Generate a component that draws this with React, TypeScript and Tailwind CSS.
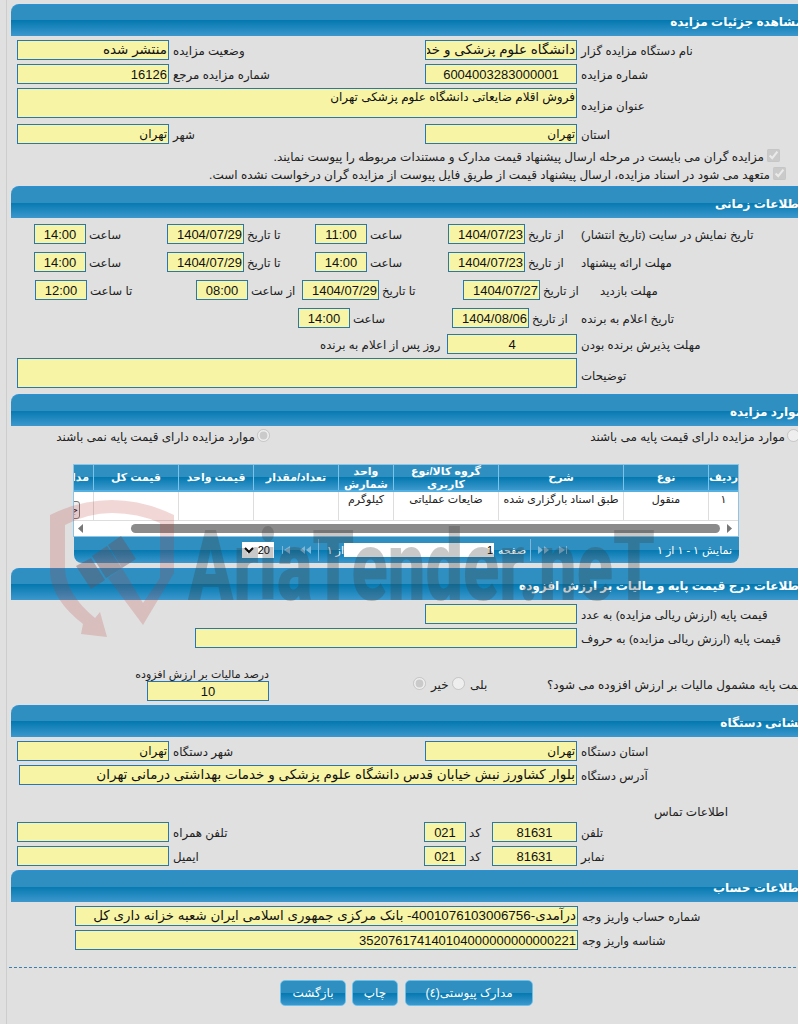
import React from 'react';

const HEADER_BG = 'bg-[linear-gradient(#2e8fc0_0%,#2e8fc0_50%,#0479b0_50%,#3c98cd_100%)]';

const Field: React.FC<{ w: string; value?: string; center?: boolean; h?: string; size?: string }> = ({ w, value = '', center, h = 'h-5', size }) => {
  // persian values are set a bit smaller than the digits
  const fontSize = size ?? (/[\u0600-\u06FF]/.test(value) ? 'text-[12px]' : 'text-[13px]');
  return (
    <input
      dir="rtl"
      readOnly
      value={value}
      className={`${w} ${h} ${fontSize} ${center ? 'text-center' : 'text-right'} shrink-0 border border-[#2a78ab] bg-[#f7f5a5] px-px text-[#111] outline-none`}
    />
  );
};

const Label: React.FC<{ w?: string; pad?: string; children: React.ReactNode }> = ({ w = '', pad = 'pl-[3px]', children }) => (
  <span dir="rtl" className={`${w} ${pad} h-5 shrink-0 whitespace-nowrap text-left text-[11.8px] leading-[22px] text-[#222]`}>
    {children}
  </span>
);

const Header: React.FC<{ title: string }> = ({ title }) => (
  <div dir="rtl" className={`${HEADER_BG} flex h-8 w-[800px] items-center rounded-tl-lg border-t border-[#2b91d6] pr-[8px] pt-[2px] text-[12px] font-bold text-white`}>
    {title}
  </div>
);

const Row: React.FC<{ className?: string; children: React.ReactNode }> = ({ className = 'mt-1', children }) => (
  <div className={`flex items-start ${className}`}>{children}</div>
);

const Check: React.FC<{ pad: string; text: string }> = ({ pad, text }) => (
  <div dir="rtl" className={`flex h-[18px] w-[800px] items-center ${pad} text-[12px] text-[#222]`}>
    <input type="checkbox" checked disabled readOnly className="m-0 mb-1 ml-[3px] h-[13px] w-[13px]" />
    <span className="whitespace-nowrap">{text}</span>
  </div>
);

const columns = [
  { title: 'ردیف', w: 'w-[30px]', cell: '۱' },
  { title: 'نوع', w: 'w-[85px]', cell: 'منقول' },
  { title: 'شرح', w: 'w-[125px]', cell: 'طبق اسناد بارگزاری شده' },
  { title: 'گروه کالا/نوع کاربری', w: 'w-[105px]', cell: 'ضایعات عملیاتی' },
  { title: 'واحد شمارش', w: 'w-[55px]', cell: 'کیلوگرم' },
  { title: 'تعداد/مقدار', w: 'w-[85px]', cell: '' },
  { title: 'قیمت واحد', w: 'w-[75px]', cell: '' },
  { title: 'قیمت کل', w: 'w-[85px]', cell: '' },
];

const ItemsTable = () => (
  <div className="ml-[62px] mt-[17px] w-[666px]">
    <div dir="rtl" className="overflow-hidden border border-[#8cc5e6] bg-white">
      <div className={`${HEADER_BG} flex h-[27px] w-[724px] border-b-2 border-b-[#55b0e2]`}>
        {columns.map((c) => (
          <div key={c.title} className={`${c.w} flex shrink-0 items-center justify-center border-l border-[#7cc3ea] px-1 text-center text-[11px] font-bold leading-[13px] text-white`}>
            {c.title}
          </div>
        ))}
        <div className="flex w-[79px] shrink-0 items-center pr-[4px] text-[11px] font-bold text-white">مدارک</div>
      </div>
      <div className="flex h-[29px] w-[724px] border-b border-[#ddd]">
        {columns.map((c) => (
          <div key={c.title} className={`${c.w} shrink-0 whitespace-nowrap border-l border-[#ddd] text-center text-[11px] leading-[15px] text-[#222]`}>
            {c.cell}
          </div>
        ))}
        <div className="w-[79px] shrink-0 pr-[13px] pt-[4px]">
          <button className="h-[18px] w-[34px] rounded-[3px] border border-[#777] bg-[#eee] p-0 text-[10px] text-[#222]">جزئیات</button>
        </div>
      </div>
      <div dir="ltr" className="flex h-[15px] w-[664px] items-center bg-white">
        <svg width="6" height="9" viewBox="0 0 6 9" className="ml-[4px]"><path d="M5 0v9L0 4.500z" fill="#777" /></svg>
        <div className="ml-[47px] h-[9px] w-[589px] rounded-full bg-[#8b8b8b]" />
        <svg width="6" height="9" viewBox="0 0 6 9" className="ml-[7px]"><path d="M0 0v9l5-4.500z" fill="#777" /></svg>
      </div>
    </div>
    <div className={`${HEADER_BG} ml-px flex h-[26px] w-[665px] items-center rounded-b-lg text-[11px] text-white`}>
      <select dir="rtl" className="ml-[168px] h-4 w-8 shrink-0 border-0 bg-white text-[11px] text-black" defaultValue="20">
        <option>20</option>
      </select>
      <svg width="30" height="8" viewBox="0 0 30 8" fill="#7fb7d8" className="ml-[8px] shrink-0">
        <path d="M0 0h1v8H0zM8 0v8L2 4zM23 0v8l-5-4zM29 0v8l-5-4z" />
      </svg>
      <div className="ml-[6px] h-[22px] w-px shrink-0 bg-[#7fb7d8]" />
      <span dir="rtl" className="ml-[5px] w-[20px] shrink-0 whitespace-nowrap">از ۱</span>
      <input dir="rtl" readOnly value="1" className="h-[14px] w-[150px] shrink-0 bg-white px-px text-[11px] text-black outline-none" />
      <span dir="rtl" className="ml-[4px] w-[28px] shrink-0 whitespace-nowrap">صفحه</span>
      <div className="ml-[4px] h-[22px] w-px shrink-0 bg-[#7fb7d8]" />
      <svg width="30" height="8" viewBox="0 0 30 8" fill="#7fb7d8" className="ml-[7px] shrink-0">
        <path d="M0 0v8l5-4zM6 0v8l5-4zM21 0v8l6-4zM28 0h1v8h-1z" />
      </svg>
      <span dir="rtl" className="ml-[89px] shrink-0 whitespace-nowrap">نمایش ۱ - ۱ از ۱</span>
    </div>
  </div>
);

const Watermark = () => (
  <div className="pointer-events-none absolute inset-0">
    <svg width="798" height="1024" className="absolute left-0 top-0">
      <path
        d="M143 625L174 573V515Q143 500 112 500Q80 500 50 515V573Q52 600 83 624L81 634L107 637L100 612L95 618Q67 595 65 570V525Q88 513 112 513Q138 513 160 523V578L143 603L122 568L108 578Z"
        fill="rgba(190,55,55,0.2)"
      />
      <path
        d="M76 566L91 558L105 580L91 589ZM92 556L107 546L122 568L106 578ZM108 545L121 536L136 559L122 568Z"
        fill="rgba(110,80,90,0.4)"
      />
    </svg>
    <span className="absolute left-[188px] top-[517px] origin-left scale-x-[0.68] whitespace-nowrap font-['Roboto',sans-serif] text-[98px] font-black leading-[100px] text-[rgba(60,60,60,0.28)]">
      AriaTender.neT
    </span>
  </div>
);

export default function App() {
  return (
    <div className="relative h-[1024px] w-[798px] overflow-hidden bg-[#e0e0e0] font-['Liberation_Sans','DejaVu_Sans',sans-serif]">
      <div className="ml-[6px] h-full w-[830px] border-l border-[#cdcdcd] pl-1 pt-1">
        {/* جزئیات */}
        <Header title="مشاهده جزئیات مزایده" />
        <div className="pl-[6px]">
          <Row>
            <Field w="w-[152px]" value="منتشر شده" size="text-[13.5px]" />
            <Label w="w-[256px]" pad="pl-[4px]">وضعیت مزایده</Label>
            <Field w="w-[152px]" value="دانشگاه علوم پزشکی و خدمات بهداشتی درمانی تهران" size="text-[13.5px]" />
            <Label pad="pl-[4px]">نام دستگاه مزایده گزار</Label>
          </Row>
          <Row>
            <Field w="w-[152px]" value="16126" />
            <Label w="w-[256px]" pad="pl-[4px]">شماره مزایده مرجع</Label>
            <Field w="w-[152px]" value="6004003283000001" center />
            <Label pad="pl-[4px]">شماره مزایده</Label>
          </Row>
          <Row>
            <textarea dir="rtl" readOnly value="فروش اقلام ضایعاتی دانشگاه علوم پزشکی تهران" className="h-[30px] w-[560px] resize-none border border-[#2a78ab] bg-[#f7f5a5] px-px text-[12px] leading-4 text-[#111] outline-none" />
            <span className="mt-[5px]"><Label pad="pl-[4px]">عنوان مزایده</Label></span>
          </Row>
          <Row className="mt-[6px]">
            <Field w="w-[152px]" value="تهران" />
            <Label w="w-[256px]" pad="pl-[4px]">شهر</Label>
            <Field w="w-[152px]" value="تهران" />
            <Label pad="pl-[4px]">استان</Label>
          </Row>
        </div>
        <div className="mb-[2px] mt-1">
          <Check pad="pr-[31px]" text="مزایده گران می بایست در مرحله ارسال پیشنهاد قیمت مدارک و مستندات مربوطه را پیوست نمایند." />
          <Check pad="pr-[25px]" text="متعهد می شود در اسناد مزایده، ارسال پیشنهاد قیمت از طریق فایل پیوست از مزایده گران درخواست نشده است." />
        </div>

        {/* زمانی */}
        <Header title="اطلاعات زمانی" />
        <div>
          <Row className="mt-[6px] pl-[23px]">
            <Field w="w-[52px]" value="14:00" center />
            <Label w="w-[81px]">ساعت</Label>
            <Field w="w-[77px]" value="1404/07/29" />
            <Label w="w-[71px]">تا تاریخ</Label>
            <Field w="w-[52px]" value="11:00" center />
            <Label w="w-[81px]">ساعت</Label>
            <Field w="w-[77px]" value="1404/07/23" />
            <Label w="w-[56px]">از تاریخ</Label>
            <Label pad="pl-0">تاریخ نمایش در سایت (تاریخ انتشار)</Label>
          </Row>
          <Row className="mt-2 pl-[23px]">
            <Field w="w-[52px]" value="14:00" center />
            <Label w="w-[81px]">ساعت</Label>
            <Field w="w-[77px]" value="1404/07/29" />
            <Label w="w-[71px]">تا تاریخ</Label>
            <Field w="w-[52px]" value="14:00" center />
            <Label w="w-[81px]">ساعت</Label>
            <Field w="w-[77px]" value="1404/07/23" />
            <Label w="w-[56px]">از تاریخ</Label>
            <Label pad="pl-0">مهلت ارائه پیشنهاد</Label>
          </Row>
          <Row className="mt-2 pl-[24px]">
            <Field w="w-[52px]" value="12:00" center />
            <Label w="w-[109px]">تا ساعت</Label>
            <Field w="w-[52px]" value="08:00" center />
            <Label w="w-[54px]">از ساعت</Label>
            <Field w="w-[77px]" value="1404/07/29" />
            <Label w="w-[84px]">تا تاریخ</Label>
            <Field w="w-[77px]" value="1404/07/27" />
            <Label w="w-[60px]">از تاریخ</Label>
            <Label pad="pl-0">مهلت بازدید</Label>
          </Row>
          <Row className="mt-2 pl-[287px]">
            <Field w="w-[52px]" value="14:00" center />
            <Label w="w-[102px]">ساعت</Label>
            <Field w="w-[77px]" value="1404/08/06" />
            <Label w="w-[52px]">از تاریخ</Label>
            <Label pad="pl-0">تاریخ اعلام به برنده</Label>
          </Row>
          <Row className="mt-[6px] pl-[309px]">
            <Label w="w-[127px]" pad="pl-0">روز پس از اعلام به برنده</Label>
            <Field w="w-[130px]" value="4" center />
            <Label pad="pl-[4px]">مهلت پذیرش برنده بودن</Label>
          </Row>
          <Row className="mt-1 pl-[6px]">
            <Field w="w-[560px]" h="h-[30px]" />
            <span className="mt-[5px]"><Label pad="pl-[4px]">توضیحات</Label></span>
          </Row>
        </div>

        {/* موارد */}
        <div className="mt-[6px]"><Header title="موارد مزایده" /></div>
        <div className="mt-[1px] flex h-5 items-center pl-[43px] text-[12px] text-[#222]">
          <span dir="rtl" className="flex w-[746px] items-center gap-[2px]">
            <span className="flex w-[528px] shrink-0 items-center gap-[2px]">
              <input type="radio" disabled readOnly className="m-0 mb-1 h-[13px] w-[13px]" />
              <span className="whitespace-nowrap">موارد مزایده دارای قیمت پایه می باشند</span>
            </span>
            <span className="flex shrink-0 items-center gap-[2px]">
              <input type="radio" checked disabled readOnly className="m-0 mb-1 h-[13px] w-[13px]" />
              <span className="whitespace-nowrap">موارد مزایده دارای قیمت پایه نمی باشند</span>
            </span>
          </span>
        </div>
        <ItemsTable />

        {/* قیمت پایه */}
        <div className="mt-[5px]"><Header title="اطلاعات درج قیمت پایه و مالیات بر ارزش افزوده" /></div>
        <div>
          <Row className="mt-1 pl-[414px]">
            <Field w="w-[152px]" />
            <Label pad="pl-[4px]">قیمت پایه (ارزش ریالی مزایده) به عدد</Label>
          </Row>
          <Row className="mt-1 pl-[184px]">
            <Field w="w-[382px]" />
            <Label pad="pl-[4px]">قیمت پایه (ارزش ریالی مزایده) به حروف</Label>
          </Row>
          <div className="mt-5 flex items-end pl-[123px]">
            <div className="flex w-[135px] shrink-0 flex-col items-end">
              <span dir="rtl" className="h-[13px] whitespace-nowrap text-[11px] leading-[13px] text-[#222]">درصد مالیات بر ارزش افزوده</span>
              <Field w="w-[122px]" value="10" center />
            </div>
            <div className="mb-[6px] flex h-5 items-center pl-[144px] text-[12px] text-[#222]">
              <input type="radio" checked disabled readOnly className="m-0 mb-1 h-[13px] w-[13px]" />
              <span className="ml-[5px] w-[19px]">خیر</span>
              <input type="radio" disabled readOnly className="m-0 mb-1 ml-[2px] h-[13px] w-[13px]" />
              <span className="ml-[5px] w-[20px]">بلی</span>
              <span dir="rtl" className="ml-[57px] whitespace-nowrap">قیمت پایه مشمول مالیات بر ارزش افزوده می شود؟</span>
            </div>
          </div>
        </div>

        {/* نشانی */}
        <div className="mt-1"><Header title="نشانی دستگاه" /></div>
        <div className="pl-[6px]">
          <Row>
            <Field w="w-[152px]" value="تهران" />
            <Label w="w-[256px]" pad="pl-[4px]">شهر دستگاه</Label>
            <Field w="w-[152px]" value="تهران" />
            <Label pad="pl-[4px]">استان دستگاه</Label>
          </Row>
          <Row className="mt-1 pl-[2px]">
            <Field w="w-[558px]" value="بلوار کشاورز نبش خیابان قدس دانشگاه علوم پزشکی و خدمات بهداشتی درمانی تهران" size="text-[13.5px]" />
            <Label pad="pl-[4px]">آدرس دستگاه</Label>
          </Row>
          <div dir="rtl" className="mt-[18px] h-[19px] pr-[108px] text-[12px] leading-[19px] text-[#222]">
            <span className="block w-[721px] whitespace-nowrap">اطلاعات تماس</span>
          </div>
          <Row className="mt-0">
            <Field w="w-[152px]" />
            <Label w="w-[255px]" pad="pl-[4px]">تلفن همراه</Label>
            <Field w="w-[42px]" value="021" center />
            <Label w="w-[26px]">کد</Label>
            <Field w="w-[85px]" value="81631" center />
            <Label pad="pl-[4px]">تلفن</Label>
          </Row>
          <Row>
            <Field w="w-[152px]" />
            <Label w="w-[255px]" pad="pl-[4px]">ایمیل</Label>
            <Field w="w-[42px]" value="021" center />
            <Label w="w-[26px]">کد</Label>
            <Field w="w-[85px]" value="81631" center />
            <Label pad="pl-[4px]">نمابر</Label>
          </Row>
        </div>

        {/* حساب */}
        <div className="mt-1"><Header title="اطلاعات حساب" /></div>
        <div className="pl-[64px]">
          <Row>
            <Field w="w-[503px]" value="درآمدی-4001076103006756- بانک مرکزی جمهوری اسلامی ایران شعبه خزانه داری کل" size="text-[13.4px]" />
            <Label pad="pl-[4px]">شماره حساب واریز وجه</Label>
          </Row>
          <Row>
            <Field w="w-[503px]" value="352076174140104000000000000221" />
            <Label pad="pl-[4px]">شناسه واریز وجه</Label>
          </Row>
        </div>

        <div className="-ml-[2px] mt-[17px] border-t border-dashed border-[#3b80ad]" />
        <div className="ml-[269px] mt-[12px] flex gap-[6px]">
          <button className={`${HEADER_BG} h-[26px] w-[66px] rounded-[5px] border border-[#6cc0ea] text-[12px] text-white`}>بازگشت</button>
          <button className={`${HEADER_BG} h-[26px] w-[46px] rounded-[5px] border border-[#6cc0ea] text-[12px] text-white`}>چاپ</button>
          <button className={`${HEADER_BG} ml-px h-[26px] w-[128px] rounded-[5px] border border-[#6cc0ea] text-[12px] text-white`}>مدارک پیوستی(٤)</button>
        </div>
      </div>
      <Watermark />
    </div>
  );
}
